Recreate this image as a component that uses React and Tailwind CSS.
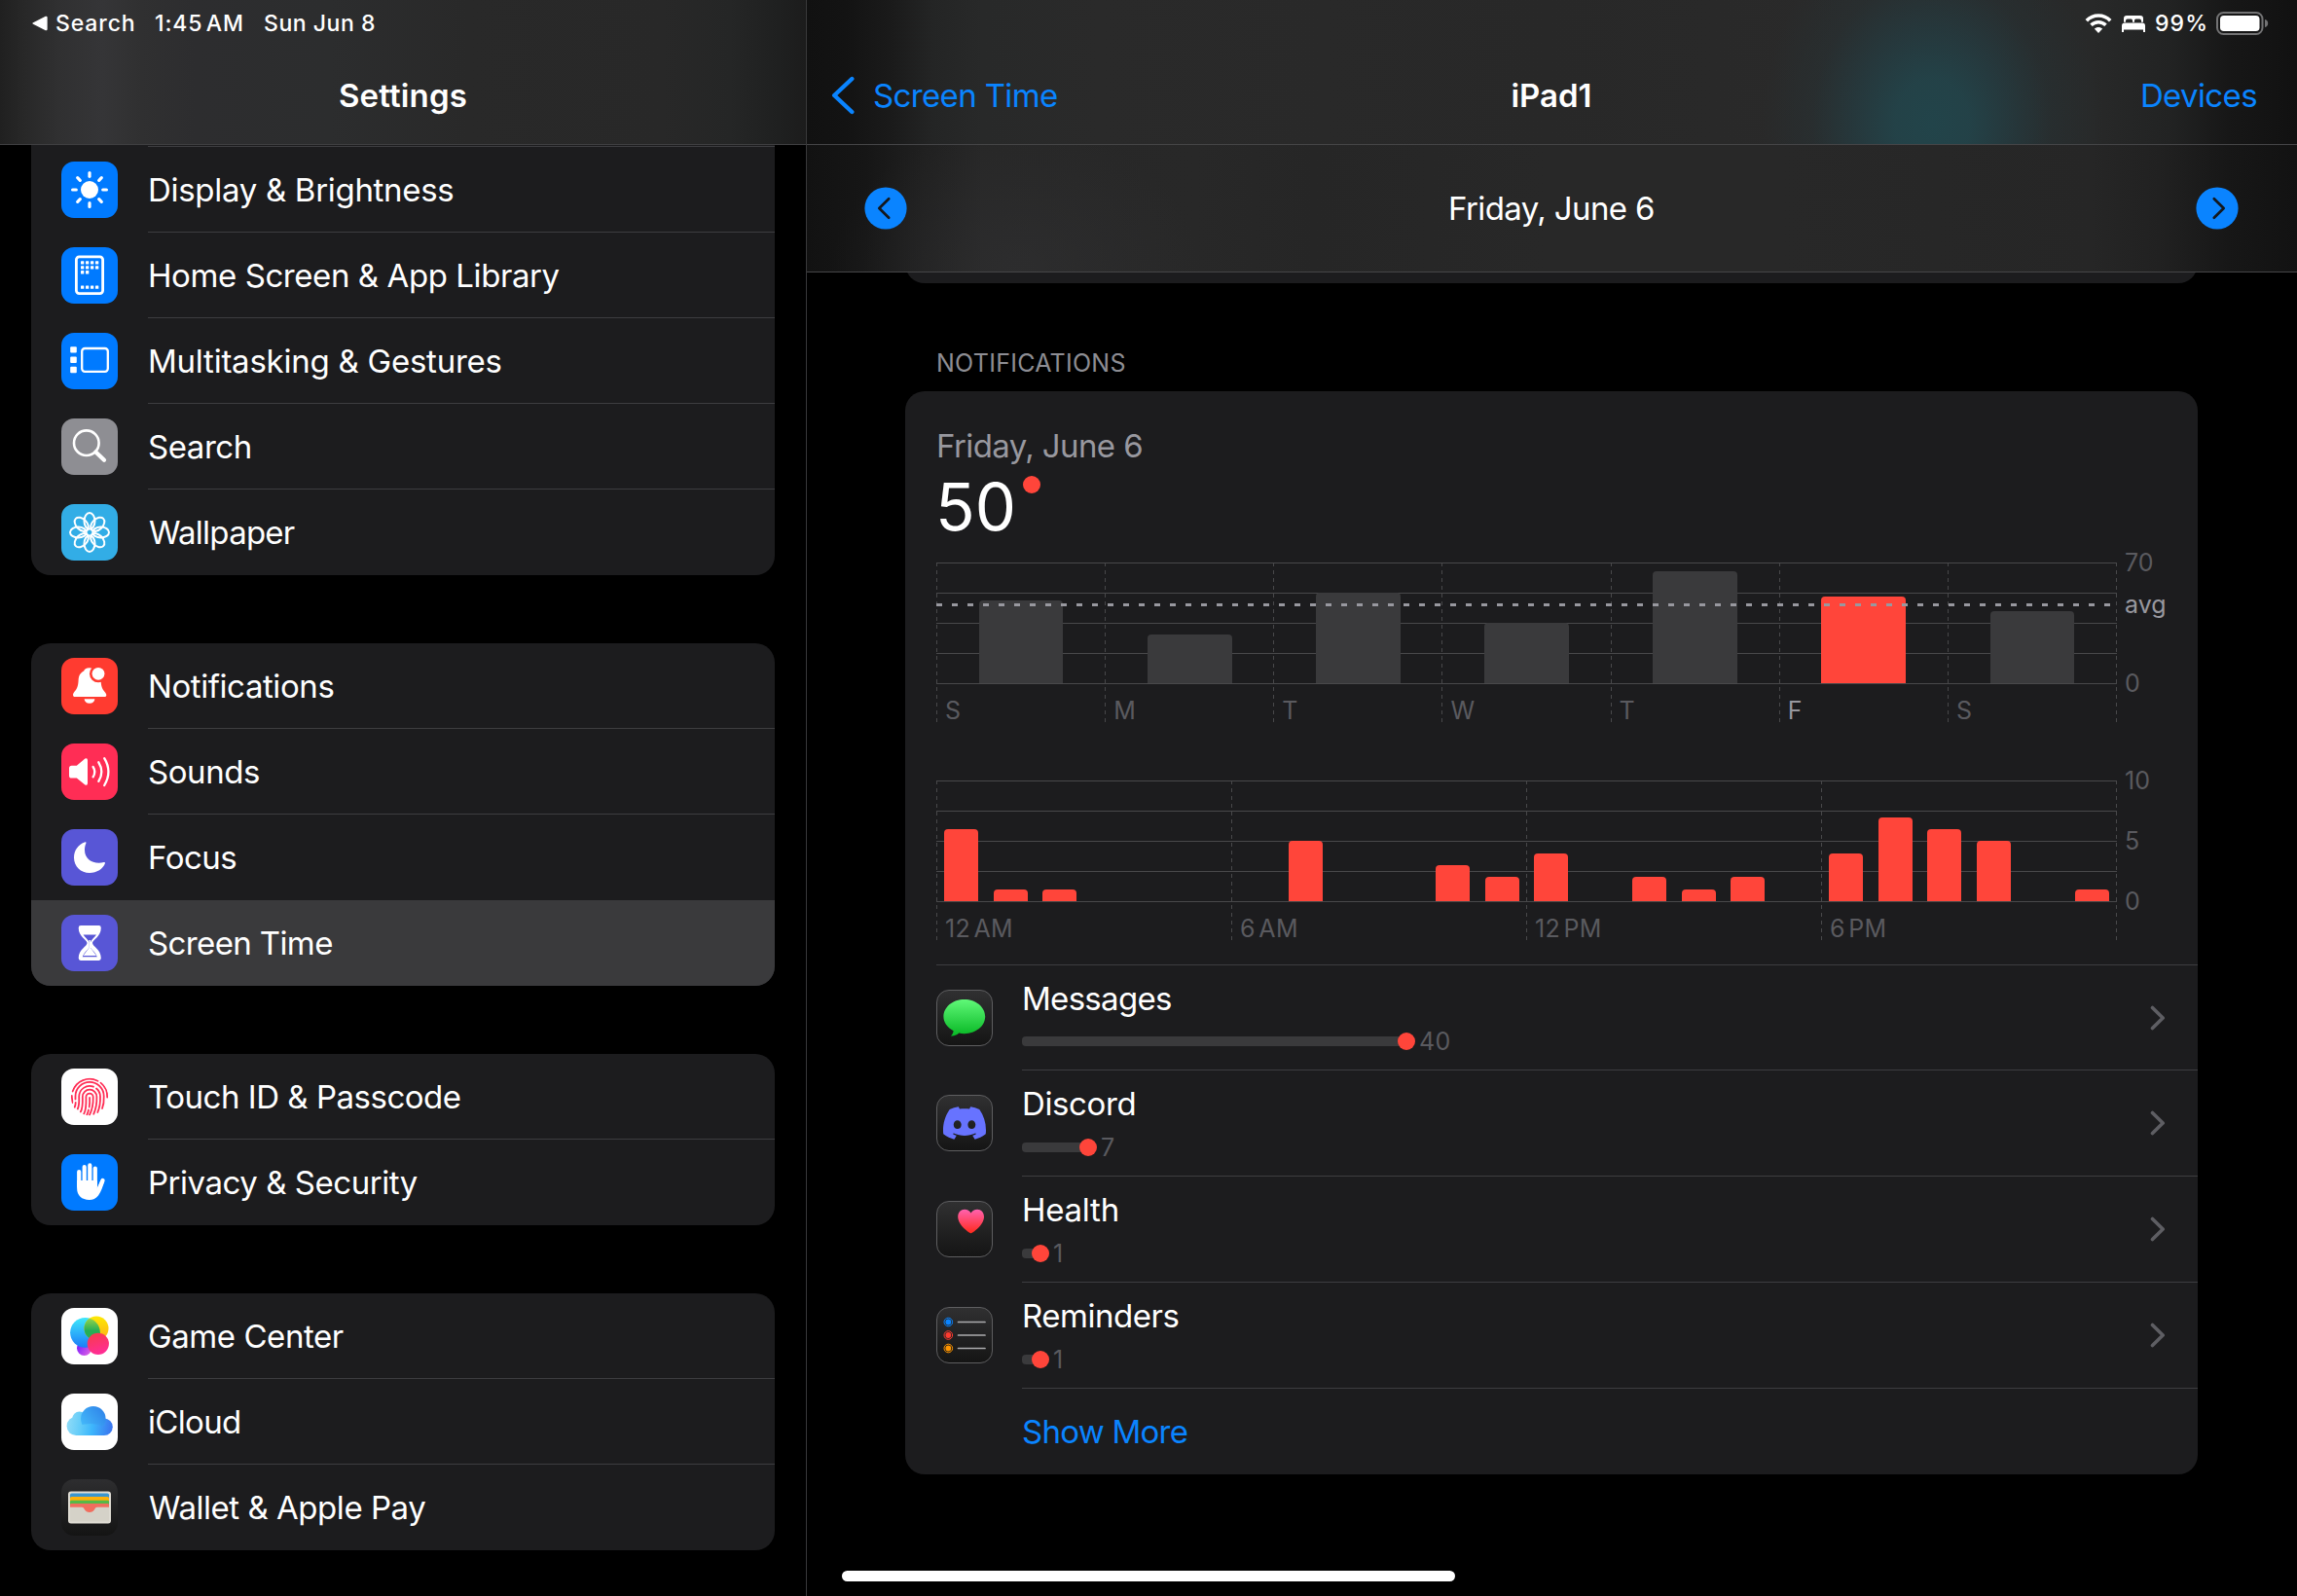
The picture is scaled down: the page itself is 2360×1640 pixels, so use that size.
import { SiDiscord } from "react-icons/si";

const petals = [0, 45, 90, 135, 180, 225, 270, 315];

function Tile({ className, children }) {
  return (
    <div className={`size-[58px] shrink-0 overflow-hidden rounded-[13px] ${className}`}>
      <svg viewBox="0 0 58 58" className="size-full" fill="none">
        {children}
      </svg>
    </div>
  );
}

function SunTile() {
  return (
    <Tile className="bg-[#007aff]">
      <circle cx="29" cy="29" r="9" fill="#fff" />
      {petals.map((a) => (
        <path key={a} d="M29 15.3V11.6" stroke="#fff" strokeWidth="3.2" strokeLinecap="round" transform={`rotate(${a} 29 29)`} />
      ))}
    </Tile>
  );
}

function HomeTile() {
  const dots = [];
  [14.3, 19.2].forEach((y) => [20, 25, 30, 35].forEach((x) => dots.push([x, y])));
  [20, 25].forEach((x) => dots.push([x, 24.1]));
  [20, 25, 30, 35].forEach((x) => dots.push([x, 39.5]));
  return (
    <Tile className="bg-[#007aff]">
      <rect x="15.4" y="9.8" width="27.2" height="37.8" rx="3" stroke="#fff" strokeWidth="2.8" />
      {dots.map(([x, y]) => (
        <rect key={`${x}-${y}`} x={x} y={y} width="3.3" height="3.3" rx="0.5" fill="#fff" />
      ))}
    </Tile>
  );
}

function MultitaskTile() {
  return (
    <Tile className="bg-[#007aff]">
      <rect x="9.2" y="14.2" width="6.6" height="6.4" rx="1" fill="#fff" />
      <rect x="9.2" y="24.5" width="6.6" height="6.4" rx="1" fill="#fff" />
      <rect x="9.2" y="34.8" width="6.6" height="6.4" rx="1" fill="#fff" />
      <rect x="21.2" y="16" width="26.6" height="23.8" rx="3" stroke="#fff" strokeWidth="2.3" />
    </Tile>
  );
}

function SearchTile() {
  return (
    <Tile className="bg-[#8e8e93]">
      <circle cx="25.8" cy="25.2" r="12.8" stroke="#fff" strokeWidth="2.6" />
      <path d="M35.4 34.4L44 42.8" stroke="#fff" strokeWidth="4.2" strokeLinecap="round" />
    </Tile>
  );
}

function WallpaperTile() {
  return (
    <Tile className="bg-[#32ade6]">
      {petals.map((a) => (
        <ellipse key={a} cx="0" cy="-11.6" rx="5.5" ry="8.4" stroke="#fff" strokeWidth="2" transform={`translate(29 29) rotate(${a})`} />
      ))}
    </Tile>
  );
}

function BellTile() {
  return (
    <Tile className="bg-[#ff3b30]">
      <path
        d="M29 10.2C25.4 10.2 23.6 11.8 23.2 13.4C19.3 15.2 17.8 18.6 17.6 23C17.3 29.5 16 32 13.5 34.8C12.1 36.6 11.8 37.8 12.2 39C12.5 39.7 13 40 14 40H44.3C45.4 40 45.9 39.7 46.2 39C46.6 37.7 45.9 36.4 44.6 34.9C42 32 40.9 29.5 40.6 23C40.2 15.8 35.6 11 29 10.2Z"
        fill="#fff"
      />
      <path d="M23.6 42.3H34.4C34.2 45 32.2 46.8 29 46.8C25.8 46.8 23.8 45 23.6 42.3Z" fill="#fff" />
      <circle cx="38" cy="16.3" r="9" fill="#ff3b30" />
      <circle cx="38" cy="16.3" r="6.4" fill="#fff" />
    </Tile>
  );
}

function SoundTile() {
  return (
    <Tile className="bg-[#ff2d55]">
      <path d="M8 25.4Q8 22.8 10.6 22.8H15.8L24.4 15.6Q27 14.4 27 17.4V40.8Q27 43.8 24.4 42.4L15.8 35.6H10.6Q8 35.6 8 33Z" fill="#fff" />
      <g stroke="#fff" strokeWidth="2.3" strokeLinecap="round">
        <path d="M32.6 24Q36 29 32.6 34.4" />
        <path d="M38.3 19.3Q44.4 29 38.3 38.8" />
        <path d="M44.2 15.2Q52.6 29 44.2 43" />
      </g>
    </Tile>
  );
}

function MoonTile() {
  return (
    <Tile className="bg-[#5856d6]">
      <path
        d="M24.6 13.3C17.2 15.8 13 22 13 29.2C13 38.2 20 45 29 45C36.6 45 42.9 40.6 44.9 35.2Q45.3 33.7 43.7 34.1C33 36.6 24 31 24 21.4C24 18.8 24.5 16.6 25.4 14.6Q25.8 12.9 24.6 13.3Z"
        fill="#fff"
      />
    </Tile>
  );
}

function HourglassTile() {
  return (
    <Tile className="bg-[#5856d6]">
      <path
        d="M20 11H38.6Q40.8 11 40.8 13.4C40.8 22.5 32 25.5 32 29C32 32.5 40.8 35.5 40.8 44.6Q40.8 47 38.6 47H20Q17.7 47 17.7 44.6C17.7 35.5 26.5 32.5 26.5 29C26.5 25.5 17.7 22.5 17.7 13.4Q17.7 11 20 11Z"
        fill="#fff"
      />
      <path d="M22.5 20.4H36C34.2 23.2 30.6 25.6 29.9 28.4V33.8C31.6 36.4 35.4 39 36.8 43.2H21.7C23.1 39 26.9 36.4 28.6 33.8V28.4C27.9 25.6 24.3 23.2 22.5 20.4Z" fill="#5856d6" />
      <path d="M28.5 26H30V34L36 42H22.5L28.5 34Z" fill="#fff" />
    </Tile>
  );
}

function TouchTile() {
  return (
    <Tile className="bg-white">
      <defs>
        <clipPath id="printClip">
          <circle cx="29" cy="29" r="19.4" />
        </clipPath>
      </defs>
      <g stroke="#ff2d55" strokeWidth="1.8" strokeLinecap="round" clipPath="url(#printClip)">
        <path d="M11.6 23.5A18.3 18.3 0 0 1 37.5 12.8" />
        <path d="M40.5 14.6A18.3 18.3 0 0 1 47.2 29.5" />
        <path d="M10.8 28C10.7 30.5 11.5 32 11.3 35" />
        <path d="M14.5 31.5V28.5A14.6 14.6 0 0 1 43.7 28.5C43.9 33 43.4 37.5 42 41" />
        <path d="M14.7 35C14.7 37 14.2 38.5 13.6 40" />
        <path d="M16.8 41.5C18.6 38 18.3 33 18.2 28.8A10.9 10.9 0 0 1 33 18.7" />
        <path d="M36 20.5A10.9 10.9 0 0 1 40 28.8C40.2 34.5 39.5 40 37.3 45" />
        <path d="M19.8 44.5C22.4 40 21.9 34 21.8 29A7.3 7.3 0 0 1 36.4 29C36.6 36 35.6 41.5 33.2 46.8" />
        <path d="M23.2 46.5C26 41.5 25.5 35 25.4 29.3A3.65 3.65 0 0 1 32.7 29.3C32.9 36.5 32 42 29 47.6" />
        <path d="M29.1 30C29.3 34 29.2 37 28.7 39.5M28 42.5C27.5 44.5 27 46 26.3 47.6" />
      </g>
    </Tile>
  );
}

function HandTile() {
  return (
    <Tile className="bg-[#007aff]">
      <g stroke="#fff" strokeWidth="4.2" strokeLinecap="round">
        <path d="M18.2 18V33M23.7 13V33M29.3 11.4V33M34.8 14.5V33M42.5 27L38.5 36" />
      </g>
      <path d="M16.1 27H36.9V35.4L40.6 26.4L44.5 27.6C42.4 33.6 41 38.6 38 42.4C35.5 45.6 32.5 46.9 28.8 46.9C21 46.9 16.1 42.6 16.1 35Z" fill="#fff" />
    </Tile>
  );
}

function GameTile() {
  return (
    <Tile className="bg-white">
      <defs>
        <linearGradient id="gcBlue" x1="0" y1="0" x2="0" y2="1">
          <stop offset="0" stopColor="#3fe9fb" />
          <stop offset="1" stopColor="#1c7df8" />
        </linearGradient>
        <linearGradient id="gcYellow" x1="0" y1="0" x2="0" y2="1">
          <stop offset="0" stopColor="#fde905" />
          <stop offset="1" stopColor="#fdae19" />
        </linearGradient>
        <linearGradient id="gcGreen" x1="0" y1="0" x2="0" y2="1">
          <stop offset="0" stopColor="#a8d94c" />
          <stop offset="0.6" stopColor="#25ae55" />
        </linearGradient>
        <linearGradient id="gcPink" x1="0" y1="0" x2="0.3" y2="1">
          <stop offset="0" stopColor="#f73c46" />
          <stop offset="1" stopColor="#ff2d92" />
        </linearGradient>
        <linearGradient id="gcPurple" x1="0" y1="0.3" x2="1" y2="1">
          <stop offset="0" stopColor="#7c1dfb" />
          <stop offset="1" stopColor="#ea6ae0" />
        </linearGradient>
        <clipPath id="gcClip">
          <circle cx="24.5" cy="25.3" r="15.4" />
        </clipPath>
      </defs>
      <circle cx="23.6" cy="41.5" r="7.6" fill="url(#gcPurple)" />
      <circle cx="24.5" cy="25.3" r="15.4" fill="url(#gcBlue)" />
      <circle cx="36" cy="21" r="12.5" fill="url(#gcYellow)" />
      <circle cx="36" cy="21" r="12.5" fill="url(#gcGreen)" clipPath="url(#gcClip)" />
      <circle cx="37.8" cy="36.8" r="11.1" fill="url(#gcPink)" />
    </Tile>
  );
}

function CloudTile() {
  return (
    <Tile className="bg-white">
      <defs>
        <linearGradient id="cloudFill" gradientUnits="userSpaceOnUse" x1="6" y1="30" x2="53" y2="36">
          <stop offset="0" stopColor="#8edbf7" />
          <stop offset="0.3" stopColor="#62cbf9" />
          <stop offset="0.55" stopColor="#3db6fc" />
          <stop offset="1" stopColor="#3a72ee" />
        </linearGradient>
        <linearGradient id="cloudTop" gradientUnits="userSpaceOnUse" x1="21" y1="36" x2="44" y2="18">
          <stop offset="0" stopColor="#45bdfb" />
          <stop offset="1" stopColor="#3086ea" />
        </linearGradient>
      </defs>
      <g fill="url(#cloudFill)">
        <circle cx="15.2" cy="33.4" r="9.6" />
        <circle cx="18.6" cy="26" r="7.4" />
        <circle cx="44" cy="34.2" r="8.8" />
        <rect x="15" y="27" width="29" height="16" />
      </g>
      <circle cx="32.8" cy="25.8" r="12.8" fill="url(#cloudTop)" />
      <path d="M15.2 43V34Q30 28 44 34V43Z" fill="url(#cloudFill)" />
    </Tile>
  );
}

function WalletTile() {
  return (
    <Tile className="bg-linear-to-b from-[#2e2e30] to-[#141414]">
      <rect x="7" y="12.4" width="44" height="33" rx="3" fill="#dedbd2" />
      <rect x="9" y="14.6" width="40" height="8" rx="1.6" fill="#3a96cf" />
      <rect x="9" y="18" width="40" height="8" rx="1.6" fill="#feb109" />
      <rect x="9" y="21.8" width="40" height="6" rx="1.4" fill="#56b948" />
      <rect x="9" y="28.8" width="40" height="14.6" fill="#d5d2c8" />
      <path
        d="M9 26.4Q9 25 10.6 25H47.4Q49 25 49 26.4V28.8H37C35.4 28.8 35 29.6 34.2 31C33 33 31.4 34 29 34C26.6 34 25 33 23.8 31C23 29.6 22.6 28.8 21 28.8H9Z"
        fill="#f16d5e"
      />
    </Tile>
  );
}

function AppTile({ children }) {
  return (
    <div className="flex size-[58px] shrink-0 items-center justify-center overflow-hidden rounded-[13px] border border-[#5e5e60] bg-linear-to-b from-[#303031] to-[#151515]">
      {children}
    </div>
  );
}

function MessagesIcon() {
  return (
    <svg viewBox="1 1 56 56" className="size-[56px] shrink-0">
      <defs>
        <linearGradient id="msgFill" gradientUnits="userSpaceOnUse" x1="0" y1="10" x2="0" y2="47">
          <stop offset="0" stopColor="#60f878" />
          <stop offset="1" stopColor="#09b926" />
        </linearGradient>
      </defs>
      <path
        d="M28.8 10C17 10 7.4 17.8 7.4 27.6C7.4 33.6 11 38.8 17.6 42.2C17.3 44.6 16.4 46 14.9 47.4C17.8 48 21.4 46.6 23.2 44.6C25 45 26.8 45.2 28.8 45.2C40.6 45.2 50.2 37.4 50.2 27.6C50.2 17.8 40.6 10 28.8 10Z"
        fill="url(#msgFill)"
      />
    </svg>
  );
}

function HeartIcon() {
  return (
    <svg viewBox="1 1 56 56" className="size-[56px] shrink-0">
      <defs>
        <linearGradient id="heartFill" x1="0" y1="0" x2="0" y2="1">
          <stop offset="0" stopColor="#ff62b0" />
          <stop offset="1" stopColor="#ff2a1c" />
        </linearGradient>
      </defs>
      <path
        d="M35.6 33.2C34.6 33.2 22.2 25.4 22.2 16.2C22.2 11.8 25.2 8.7 29 8.7C32 8.7 34.4 10.2 35.6 12.6C36.8 10.2 39.2 8.7 42.2 8.7C46 8.7 49 11.8 49 16.2C49 25.4 36.6 33.2 35.6 33.2Z"
        fill="url(#heartFill)"
      />
    </svg>
  );
}

function RemindersIcon() {
  return (
    <svg viewBox="1 1 56 56" className="size-[56px] shrink-0">
      {[
        [15.5, "#0a84ff"],
        [29, "#ff3b30"],
        [42.5, "#ff9500"],
      ].map(([y, c]) => (
        <g key={c}>
          <circle cx="12.3" cy={y} r="4.3" fill="none" stroke={c} strokeWidth="1" />
          <circle cx="12.3" cy={y} r="2.9" fill={c} />
          <path d={`M22.5 ${y}H50`} stroke="#acacae" strokeWidth="1.7" strokeLinecap="round" />
        </g>
      ))}
    </svg>
  );
}

const groups = [
  {
    className: "rounded-b-[20px] border-t border-[#1c1c1e]",
    rows: [
      { label: "Display & Brightness", icon: <SunTile />, text: "tracking-[-0.3px]" },
      { label: "Home Screen & App Library", icon: <HomeTile />, text: "tracking-[-0.42px]" },
      { label: "Multitasking & Gestures", icon: <MultitaskTile />, text: "tracking-[-0.24px]" },
      { label: "Search", icon: <SearchTile />, text: "tracking-[-0.45px]" },
      { label: "Wallpaper", icon: <WallpaperTile />, text: "pl-[1px] tracking-[-0.75px]" },
    ],
  },
  {
    className: "mt-[70px] rounded-[20px]",
    rows: [
      { label: "Notifications", icon: <BellTile />, text: "tracking-[-0.42px]" },
      { label: "Sounds", icon: <SoundTile />, text: "tracking-[-0.43px]" },
      { label: "Focus", icon: <MoonTile />, text: "tracking-[-0.5px]", plain: true },
      { label: "Screen Time", icon: <HourglassTile />, text: "tracking-[-0.62px]", active: true },
    ],
  },
  {
    className: "mt-[70px] rounded-[20px]",
    rows: [
      { label: "Touch ID & Passcode", icon: <TouchTile />, text: "tracking-[-0.48px]" },
      { label: "Privacy & Security", icon: <HandTile />, text: "tracking-[-0.47px]" },
    ],
  },
  {
    className: "mt-[70px] rounded-[20px]",
    rows: [
      { label: "Game Center", icon: <GameTile />, text: "tracking-[-0.43px]" },
      { label: "iCloud", icon: <CloudTile />, text: "tracking-[-0.67px]" },
      { label: "Wallet & Apple Pay", icon: <WalletTile />, text: "pl-[1px] tracking-[-0.46px]" },
    ],
  },
];

function SettingsRow({ row, last }) {
  return (
    <div className={`flex h-[88px] items-stretch pl-[31px] ${row.active ? "bg-[#3a3a3c]" : ""}`}>
      <div className="flex items-center">{row.icon}</div>
      <div
        className={`ml-[31px] flex flex-1 items-center text-[33px] leading-[42px] ${
          last || row.plain ? "" : "border-b border-[#3d3d40] pt-px"
        }`}
      >
        <span className={row.text}>{row.label}</span>
      </div>
    </div>
  );
}

function Sidebar() {
  return (
    <aside className="flex w-[829px] shrink-0 flex-col border-r border-[#38383a]">
      <header className="h-[149px] shrink-0 border-b border-[#3f3f41] bg-[linear-gradient(90deg,#202020_0px,#282828_25px,#303031_60px,#353537_105px,#303031_145px,#2d2d2f_200px,#2c2d2e_340px,#292929_480px,#282828_680px,#252626_750px,#1f2020_800px,#1c1c1c_828px)]">
        <div className="flex h-12 items-center pl-[33px] text-[23px] leading-7 font-medium">
          <svg viewBox="0 0 16 16" className="size-4 shrink-0">
            <path d="M0.6 7.4Q0 8 0.6 8.6L13.8 15.2Q15.6 15.8 15.6 14V2Q15.6 0.2 13.8 0.8Z" fill="#fff" />
          </svg>
          <span className="ml-2 w-[102px] tracking-[0.88px]">Search</span>
          <span className="w-[112px] tracking-[0.85px] [word-spacing:-3.4px]">1:45 AM</span>
          <span className="tracking-[0.54px]">Sun Jun 8</span>
        </div>
        <h1 className="flex h-[100px] items-center justify-center text-[33px] leading-[42px] font-semibold tracking-[0.14px]">Settings</h1>
      </header>
      <nav className="flex flex-1 flex-col overflow-hidden px-8">
        {groups.map((g, i) => (
          <section key={i} className={`shrink-0 overflow-hidden bg-[#1c1c1e] ${g.className}`}>
            {i === 0 && <div className="ml-[120px] h-px bg-[#3d3d40]" />}
            {g.rows.map((r, j) => (
              <SettingsRow key={r.label} row={r} last={j === g.rows.length - 1} />
            ))}
          </section>
        ))}
      </nav>
    </aside>
  );
}

function StatusIcons() {
  return (
    <div className="flex h-12 items-center justify-end pr-[29px] text-[23px] leading-7 font-medium">
      <svg viewBox="0 0 28 20" className="h-5 w-7" fill="none" stroke="#fff">
        <path d="M1.8 7.2C8.6 0.3 19.4 0.3 26.2 7.2" strokeWidth="3.6" />
        <path d="M6.5 11.8C10.7 7.7 17.3 7.7 21.5 11.8" strokeWidth="3.5" />
        <path d="M14 20L9.8 15.6C12.1 13.3 15.9 13.3 18.2 15.6Z" fill="#fff" stroke="none" />
      </svg>
      <svg viewBox="0 0 24 17" className="ml-[10px] h-[17px] w-6" fill="#fff">
        <path d="M2 6.8V3Q2 0 5 0H19Q22 0 22 3V6.8H20V5.4Q20 3.6 18.2 3.6H14.4Q13 3.6 13 5.2V6.8H11V5.2Q11 3.6 9.6 3.6H5.8Q4 3.6 4 5.4V6.8Z" />
        <path d="M0 10.6Q0 7.6 3 7.6H21Q24 7.6 24 10.6V17H22V14.6H2V17H0Z" />
      </svg>
      <span className="ml-[10px] w-[63px] tracking-[1.1px]">99%</span>
      <svg viewBox="0 0 54 24" className="h-6 w-[54px]" fill="none">
        <rect x="1" y="1" width="46.5" height="22" rx="6.5" stroke="#737374" strokeWidth="2" />
        <rect x="4" y="4" width="40.5" height="16" rx="3.8" fill="#fff" />
        <path d="M50 8V16C52.2 15.4 53.2 14 53.2 12C53.2 10 52.2 8.6 50 8Z" fill="#737374" />
      </svg>
    </div>
  );
}

function RoundChevron({ flip }) {
  return (
    <svg viewBox="0 0 44 44" className={`size-[44px] ${flip ? "-scale-x-100" : ""}`} fill="none">
      <circle cx="22" cy="22" r="21.6" fill="#0a84ff" />
      <path d="M25.2 12.2L15.3 22L25.2 31.8" stroke="#14181d" strokeWidth="2.7" strokeLinecap="round" strokeLinejoin="round" />
    </svg>
  );
}

function Grid({ top, bottom, columns }) {
  const rows = [0, 1, 2, 3, 4].map((i) => top + i * 31);
  const cols = Array.from({ length: columns + 1 }, (_, i) => Math.round((i * 1212) / columns));
  return (
    <g shapeRendering="crispEdges" fill="none" stroke="#48484a" strokeWidth="1">
      {rows.map((y) => (
        <path key={y} d={`M0 ${y + 0.5}H1213`} />
      ))}
      {cols.map((x) => (
        <path key={x} d={`M${x + 0.5} ${top}V${bottom}`} strokeDasharray="4 4" />
      ))}
    </g>
  );
}

function Bar({ x, top, base, width, color }) {
  return (
    <path
      d={`M${x} ${base}V${top + 4}Q${x} ${top} ${x + 4} ${top}H${x + width - 4}Q${x + width} ${top} ${x + width} ${top + 4}V${base}Z`}
      fill={color}
    />
  );
}

function WeekChart() {
  const bars = [
    { x: 44, w: 86, top: 47 },
    { x: 217, w: 87, top: 82 },
    { x: 390, w: 87, top: 39 },
    { x: 563, w: 87, top: 70 },
    { x: 736, w: 87, top: 17 },
    { x: 909, w: 87, top: 43 },
    { x: 1083, w: 86, top: 58 },
  ];
  const days = ["S", "M", "T", "W", "T", "F", "S"];
  return (
    <svg viewBox="0 -13 1296 193" className="h-[193px] w-[1296px] shrink-0" fontFamily="Inter, sans-serif" fontSize="25">
      <Grid top={8} bottom={172} columns={7} />
      {bars.map((b, i) => (
        <Bar key={i} x={b.x} width={b.w} top={b.top} base={132} color={i === 5 ? "#ff453a" : "#3a3a3c"} />
      ))}
      <path d="M0 132.5H1213" stroke="#48484a" shapeRendering="crispEdges" />
      <path d="M0 51.5H1212" stroke="#98989f" strokeWidth="3" strokeDasharray="6 10" />
      {days.map((d, i) => (
        <text key={i} x={i * 173.15 + 9} y="169" fill={i === 5 ? "#98989f" : "#5a5a5f"}>
          {d}
        </text>
      ))}
      <text x="1221" y="17" fill="#5a5a5f">70</text>
      <text x="1221" y="60" fill="#98989f">avg</text>
      <text x="1221" y="141" fill="#5a5a5f">0</text>
    </svg>
  );
}

function DayChart() {
  const hours = { 0: 6, 1: 1, 2: 1, 7: 5, 10: 3, 11: 2, 12: 4, 14: 2, 15: 1, 16: 2, 18: 4, 19: 7, 20: 6, 21: 5, 23: 1 };
  const labels = ["12 AM", "6 AM", "12 PM", "6 PM"];
  return (
    <svg viewBox="0 -20 1296 200" className="mt-5 h-[200px] w-[1296px] shrink-0" fontFamily="Inter, sans-serif" fontSize="25">
      <Grid top={12} bottom={176} columns={4} />
      {Object.entries(hours).map(([h, n]) => (
        <Bar key={h} x={Math.round(8 + h * 50.5)} width={35} top={Math.round(136 - n * 12.35)} base={136} color="#ff453a" />
      ))}
      <path d="M0 136.5H1213" stroke="#48484a" shapeRendering="crispEdges" />
      {labels.map((l, i) => (
        <text key={l} x={i * 303 + 9} y="173" fill="#5a5a5f" letterSpacing="0.3" wordSpacing="-3.8">
          {l}
        </text>
      ))}
      <text x="1221" y="21" fill="#5a5a5f">10</text>
      <text x="1221" y="83" fill="#5a5a5f">5</text>
      <text x="1221" y="145" fill="#5a5a5f">0</text>
    </svg>
  );
}

const apps = [
  { name: "Messages", count: 40, bar: 395, text: "tracking-[-0.7px]", icon: <MessagesIcon />, first: true },
  { name: "Discord", count: 7, bar: 68, text: "tracking-[-0.38px]", icon: <SiDiscord className="size-[44px] shrink-0 text-[#6773ff]" /> },
  { name: "Health", count: 1, bar: 19, text: "tracking-[-0.25px]", icon: <HeartIcon /> },
  { name: "Reminders", count: 1, bar: 19, text: "tracking-[-0.47px]", icon: <RemindersIcon /> },
];

function AppRow({ app }) {
  return (
    <div className={`flex shrink-0 ${app.first ? "h-[108px]" : "h-[109px]"}`}>
      <div className="pt-[25px]">
        <AppTile>{app.icon}</AppTile>
      </div>
      <div className="ml-[30px] flex flex-1 items-center justify-between border-b border-[#3d3d40] pr-[33px]">
        <div className="flex h-full flex-col pt-[13px]">
          <span className={`text-[33px] leading-[42px] ${app.text}`}>{app.name}</span>
          <div className={`flex h-[26px] items-center ${app.first ? "mt-[10px]" : "mt-[11px]"}`}>
            <div className="h-[10px] rounded-l-[4px] bg-[#3a3a3c]" style={{ width: app.bar }} />
            <div className="-ml-[9px] size-[18px] rounded-full bg-[#ff453a]" />
            <span className="ml-[4px] text-[25px] leading-[26px] tracking-[0.3px] text-[#5a5a5f]">{app.count}</span>
          </div>
        </div>
        <svg viewBox="0 0 16 26" className="h-[26px] w-4" fill="none">
          <path d="M2.5 2.5L13.2 13L2.5 23.5" stroke="#5e5e63" strokeWidth="3.6" strokeLinecap="round" strokeLinejoin="round" />
        </svg>
      </div>
    </div>
  );
}

function Detail() {
  return (
    <main className="flex flex-1 flex-col">
      <header className="h-[149px] shrink-0 border-b border-[#454547] bg-[radial-gradient(ellipse_175px_215px_at_1156px_128px,rgba(34,68,74,1)_0%,rgba(35,67,73,0.95)_22%,rgba(36,62,68,0.7)_45%,rgba(38,54,58,0.35)_70%,rgba(40,46,48,0)_100%),linear-gradient(90deg,#111111_0px,#131313_40px,#1b1b1b_90px,#242525_130px,#282929_180px,#2a2a2a_300px,#282828_760px,#2a2a2a_1100px,#282929_1320px,#222323_1400px,#171717_1460px,#111111_1531px)]">
        <StatusIcons />
        <div className="grid h-[100px] grid-cols-3 items-center pr-[41px] pl-[25px] text-[33px] leading-[42px]">
          <div className="flex items-center text-[#0a84ff]">
            <svg viewBox="0 0 24 40" className="h-10 w-6" fill="none">
              <path d="M21.3 3L3.2 20L21.3 37" stroke="#0a84ff" strokeWidth="4.4" strokeLinecap="round" strokeLinejoin="round" />
            </svg>
            <span className="ml-[19px] tracking-[-0.64px]">Screen Time</span>
          </div>
          <h2 className="pl-[15px] text-center font-semibold">iPad1</h2>
          <span className="text-right tracking-[-0.62px] text-[#0a84ff]">Devices</span>
        </div>
      </header>
      <div className="flex h-[131px] shrink-0 items-center justify-between border-b border-[#454547] bg-[radial-gradient(ellipse_190px_150px_at_215px_130px,rgba(50,50,52,0.5),rgba(44,44,46,0)),linear-gradient(90deg,#121212_0px,#161616_60px,#202020_120px,#272727_180px,#282828_400px,#262626_520px,#282828_760px,#282828_1000px,#262626_1320px,#212121_1390px,#171717_1460px,#121212_1531px)] pr-[60px] pl-[59px] text-[33px] leading-[42px]">
        <RoundChevron />
        <span className="tracking-[-0.61px]">Friday, June 6</span>
        <RoundChevron flip />
      </div>
      <div className="flex flex-1 flex-col pr-[102px] pl-[101px]">
        <div className="flex h-[11px] shrink-0 items-end overflow-hidden">
          <div className="h-11 w-full rounded-b-[20px] bg-[#1c1c1e]" />
        </div>
        <h3 className="flex h-[111px] shrink-0 items-end pb-[15px] pl-8 text-[25px] leading-7 tracking-[0.27px] text-[#8d8d93]">NOTIFICATIONS</h3>
        <section className="flex h-[1113px] shrink-0 flex-col overflow-hidden rounded-[20px] bg-[#1c1c1e] pt-[35px] pl-8">
          <span className="text-[33px] leading-[42px] tracking-[-0.6px] text-[#98989f]">Friday, June 6</span>
          <div className="mt-[6px] flex h-[72px] shrink-0">
            <span className="-ml-px w-[90px] text-[67px] leading-[71px]">50</span>
            <div className="mt-1 size-[18px] rounded-full bg-[#ff453a]" />
          </div>
          <WeekChart />
          <DayChart />
          <div className="mt-[21px] h-px shrink-0 bg-[#3d3d40]" />
          {apps.map((a) => (
            <AppRow key={a.name} app={a} />
          ))}
          <div className="flex h-[88px] items-center pl-[88px] text-[33px] leading-[42px] tracking-[-0.75px] text-[#0a84ff]">Show More</div>
        </section>
      </div>
    </main>
  );
}

export default function App() {
  return (
    <div className="relative flex h-[1640px] w-[2360px] overflow-hidden bg-black font-['Inter',sans-serif] text-white">
      <Sidebar />
      <Detail />
      <div className="absolute bottom-[15px] left-[865px] h-[11px] w-[630px] rounded-full bg-white" />
    </div>
  );
}
